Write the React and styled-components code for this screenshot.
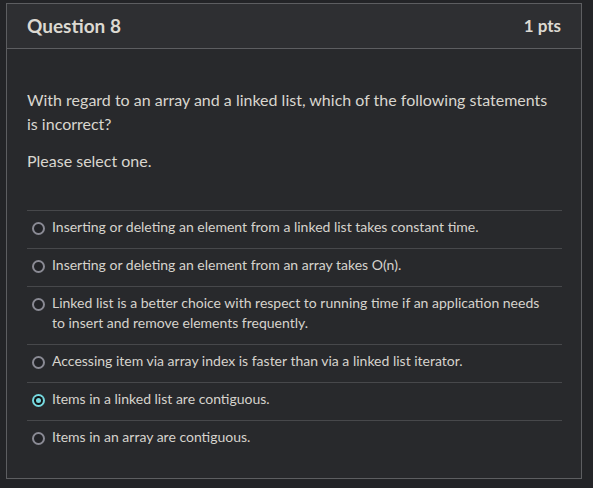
import React from "react";
import styled, { createGlobalStyle } from "styled-components";

const Global = createGlobalStyle`
  html, body { margin: 0; padding: 0; background: #232427; }
  body { font-family: Lato, "Open Sans", sans-serif; }
`;

const Page = styled.div`
  padding: 3px 12px 10px 6px;
  width: 593px;
  box-sizing: border-box;
`;

const Card = styled.div`
  width: 576px;
  height: 476px;
  box-sizing: border-box;
  border: 1px solid #5d5e61;
  background: #28292c;
  display: flex;
  flex-direction: column;
`;

const Header = styled.div`
  height: 45px;
  box-sizing: border-box;
  display: flex;
  align-items: center;
  justify-content: space-between;
  padding: 0 20px 1px 20px;
  background: #2e2f32;
  border-bottom: 1px solid #5d5e61;
  color: #dcd9d1;
  font-weight: 700;
`;

const Title = styled.span`
  font-size: 19px;
`;

const Points = styled.span`
  font-size: 17px;
`;

const Body = styled.div`
  padding: 39px 19px 0 20px;
  color: #d9d6cf;
`;

const Para = styled.p`
  margin: 0 0 ${(p) => p.$mb || 0}px;
  font-size: 16px;
  line-height: 24px;
  padding-top: ${(p) => p.$pt || 0}px;
`;

const List = styled.div`
  display: flex;
  flex-direction: column;
`;

const Option = styled.label`
  display: flex;
  align-items: flex-start;
  gap: 7px;
  border-top: 1px solid #47484b;
  padding: 6px 12px 11px 5px;
  font-size: 14px;
  line-height: 20px;
  color: #d6d3cc;
`;

const Radio = styled.span`
  flex: none;
  width: 13px;
  height: 13px;
  margin-top: 5px;
  border-radius: 50%;
  box-sizing: border-box;
  display: flex;
  align-items: center;
  justify-content: center;
  ${(p) =>
    p.$checked
      ? `
    background: #76d8df;
    &::after {
      content: "";
      width: 5px;
      height: 5px;
      border-radius: 50%;
      background: #76d8df;
      box-shadow: 0 0 0 2px #111214;
    }
  `
      : `
    border: 2px solid #8a8a94;
    background: #222327;
  `}
`;

const options = [
  "Inserting or deleting an element from a linked list takes constant time.",
  "Inserting or deleting an element from an array takes O(n).",
  "Linked list is a better choice with respect to running time if an application needs to insert and remove elements frequently.",
  "Accessing item via array index is faster than via a linked list iterator.",
  "Items in a linked list are contiguous.",
  "Items in an array are contiguous.",
];

export default function App() {
  return (
    <Page>
      <Global />
      <Card>
        <Header>
          <Title>Question 8</Title>
          <Points>1 pts</Points>
        </Header>
        <Body>
          <Para $mb={12}>
            With regard to an array and a linked list, which of the following statements is incorrect?
          </Para>
          <Para $mb={37} $pt={1}>Please select one.</Para>
          <List>
            {options.map((o, i) => (
              <Option key={i}>
                <Radio $checked={i === 4} />
                <span>{o}</span>
              </Option>
            ))}
          </List>
        </Body>
      </Card>
    </Page>
  );
}
